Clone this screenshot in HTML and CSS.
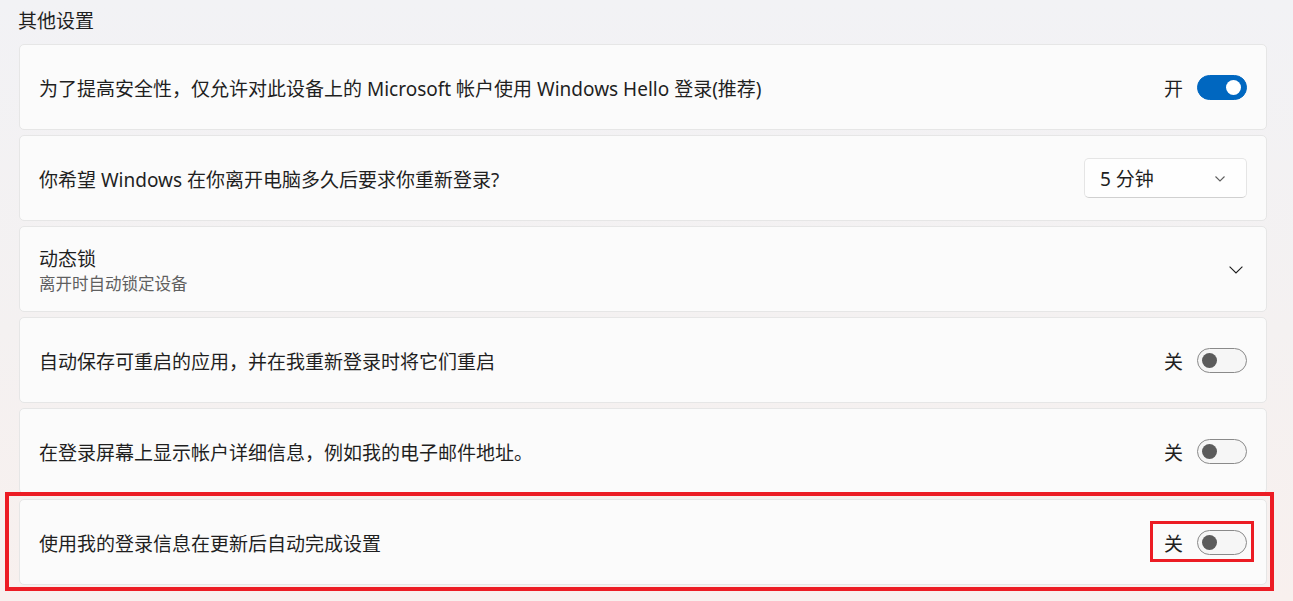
FILE: index.html
```html
<!DOCTYPE html>
<html lang="zh-CN">
<head>
<meta charset="utf-8">
<link rel="stylesheet" href="styles.css">
</head>
<body>
<div class="page">
  <h2 class="section-title">其他设置</h2>
  <div class="list">
    <div class="card">
      <div class="label">为了提高安全性，仅允许对此设备上的 Microsoft 帐户使用 Windows Hello 登录(推荐)</div>
      <div class="control">
        <span class="state">开</span>
        <span class="toggle on"><span class="knob"></span></span>
      </div>
    </div>
    <div class="card">
      <div class="label">你希望 Windows 在你离开电脑多久后要求你重新登录?</div>
      <div class="select">
        <span>5 分钟</span>
        <svg class="select-chev" width="10" height="6" viewBox="0 0 10 6"><path d="M0.5 0.5 L5 5 L9.5 0.5" fill="none" stroke="#5f5f5f" stroke-width="1.1"/></svg>
      </div>
    </div>
    <div class="card">
      <div class="label-group">
        <div class="title">动态锁</div>
        <div class="desc">离开时自动锁定设备</div>
      </div>
      <svg class="expand" width="14" height="8" viewBox="0 0 14 8"><path d="M0.6 0.6 L7 7 L13.4 0.6" fill="none" stroke="#1b1b1b" stroke-width="1.1"/></svg>
    </div>
    <div class="card">
      <div class="label">自动保存可重启的应用，并在我重新登录时将它们重启</div>
      <div class="control">
        <span class="state">关</span>
        <span class="toggle"><span class="knob"></span></span>
      </div>
    </div>
    <div class="card">
      <div class="label">在登录屏幕上显示帐户详细信息，例如我的电子邮件地址。</div>
      <div class="control">
        <span class="state">关</span>
        <span class="toggle"><span class="knob"></span></span>
      </div>
    </div>
    <div class="card highlighted">
      <span class="mark-outer"></span>
      <div class="label">使用我的登录信息在更新后自动完成设置</div>
      <div class="control marked">
        <span class="mark-inner"></span>
        <span class="state">关</span>
        <span class="toggle"><span class="knob"></span></span>
      </div>
    </div>
  </div>
</div>
</body>
</html>
```

FILE: styles.css
```css
* { box-sizing: border-box; }
html, body {
  margin: 0;
  padding: 0;
  height: 100%;
}
body {
  font-family: "Noto Sans", "Noto Sans CJK SC", sans-serif;
  color: #1f1f1f;
  background: linear-gradient(180deg, #f2f2f5 0%, #f4f1f1 55%, #f8f0ee 100%);
  overflow: hidden;
}
.page {
  padding: 7px 26px 0 18px;
}
.section-title {
  margin: 0 0 9px 0;
  font-size: 19px;
  font-weight: 400;
  line-height: 28px;
  height: 28px;
}
.list {
  display: flex;
  flex-direction: column;
  gap: 5px;
  margin-left: 1px;
}
.card {
  position: relative;
  height: 86px;
  display: flex;
  align-items: center;
  justify-content: space-between;
  padding: 0 19px 0 19px;
  background: #fbfbfb;
  border: 1px solid #e6e6e6;
  border-radius: 5px;
}
.label {
  font-size: 19px;
  line-height: 26px;
  padding-top: 4px;
}
.title {
  font-size: 19px;
  line-height: 26px;
}
.label-group {
  display: flex;
  flex-direction: column;
  padding-top: 2px;
}
.desc {
  font-size: 16.5px;
  line-height: 23px;
  color: #5f5f5f;
}
.control {
  position: relative;
  display: flex;
  align-items: center;
  gap: 14px;
}
.state {
  font-size: 19px;
  line-height: 26px;
  padding-top: 3px;
}
.toggle {
  position: relative;
  display: flex;
  align-items: center;
  width: 50px;
  height: 25px;
  border-radius: 13px;
  border: 1px solid #8a8a8a;
  background: #f6f6f6;
  padding: 0 4px;
}
.toggle .knob {
  width: 15px;
  height: 15px;
  border-radius: 50%;
  background: #5c5c5c;
}
.toggle.on {
  background: #0067c0;
  border-color: #0067c0;
  justify-content: flex-end;
  padding: 0 5px;
}
.toggle.on .knob {
  background: #ffffff;
}
.select {
  width: 163px;
  height: 40px;
  display: flex;
  align-items: center;
  justify-content: space-between;
  padding: 0 21px 0 15px;
  background: #fefefe;
  border: 1px solid #e5e5e5;
  border-bottom-color: #d0d0d0;
  border-radius: 5px;
  font-size: 19px;
}
.select-chev { margin-top: 1px; }
.expand { margin-right: 4px; margin-top: 2px; }
.mark-outer {
  position: absolute;
  left: -15px;
  top: -8px;
  right: -8px;
  bottom: -7px;
  border: 4px solid #ec1c24;
  pointer-events: none;
}
.mark-inner {
  position: absolute;
  left: -14px;
  right: -7px;
  top: -7px;
  bottom: -5px;
  border: 3px solid #ec1c24;
  pointer-events: none;
}
```
